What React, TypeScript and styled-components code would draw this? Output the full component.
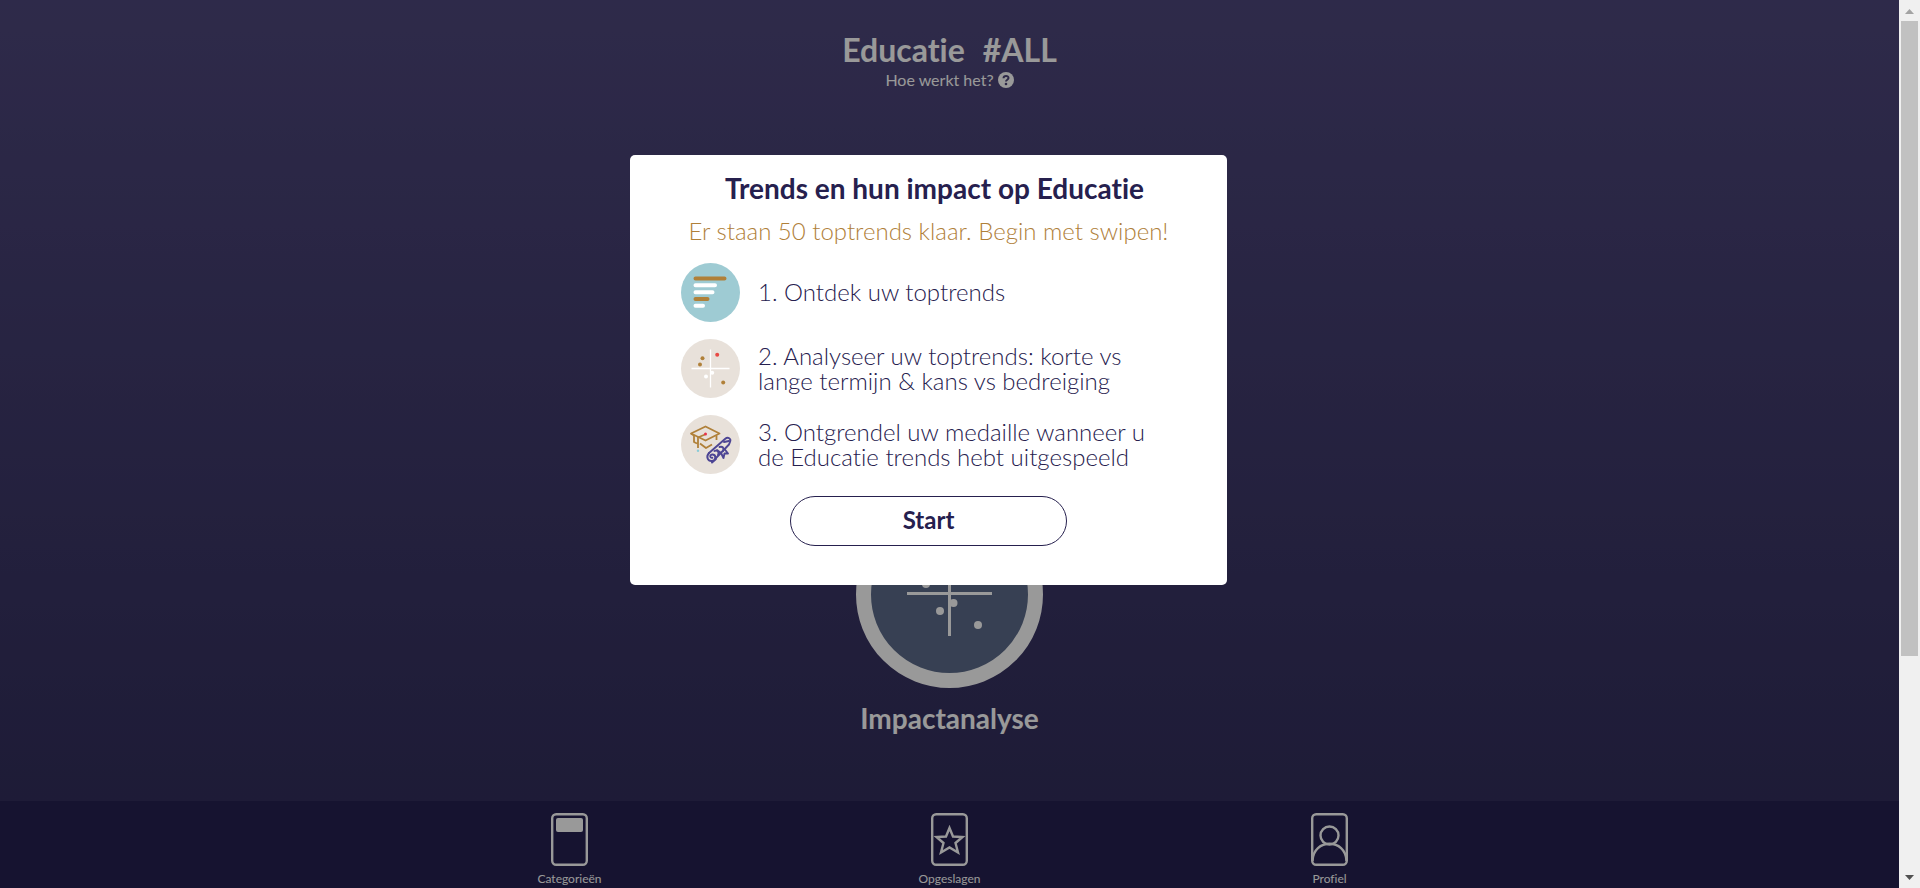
import React from "react";
import styled, { createGlobalStyle } from "styled-components";

const GlobalStyle = createGlobalStyle`
  *, *::before, *::after { box-sizing: border-box; }
  body {
    margin: 0;
    overflow: hidden;
    font-family: Lato, "Liberation Sans", sans-serif;
    font-variant-ligatures: none;
    color: #fff;
  }
  h1, h2, p, ol { margin: 0; padding: 0; }
`;

const Shell = styled.div`
  display: flex;
  height: 100vh;
`;

const Screen = styled.div`
  position: relative;
  display: flex;
  flex: 1;
  flex-direction: column;
  min-width: 0;
  overflow: hidden;
  background: linear-gradient(#4e477c, #322e5c 800px);
`;

const Header = styled.header`
  display: flex;
  flex-direction: column;
  align-items: center;
  padding-top: 30px;
`;

const PageTitle = styled.h1`
  display: flex;
  gap: 18px;
  font-size: 32px;
  line-height: 40px;
  font-weight: 700;
`;

const HelpLink = styled.a`
  display: flex;
  align-items: center;
  gap: 4px;
  color: inherit;
  font-size: 16px;
  line-height: 20px;
  text-decoration: none;
`;

const Content = styled.main`
  display: flex;
  flex: 1;
  flex-direction: column;
  align-items: center;
  justify-content: flex-end;
  min-height: 0;
  padding-bottom: 65px;
`;

const AnalysisLink = styled.a`
  display: flex;
  flex-direction: column;
  align-items: center;
  gap: 12px;
  color: inherit;
  font-size: 28px;
  line-height: 36px;
  font-weight: 700;
  text-decoration: none;
`;

const NavBar = styled.nav`
  display: flex;
  justify-content: center;
  height: 87px;
  flex-shrink: 0;
  padding-top: 12px;
  background: #262050;
`;

const NavItem = styled.a`
  display: flex;
  flex: 0 1 380px;
  flex-direction: column;
  align-items: center;
  gap: 5px;
  color: inherit;
  font-size: 12px;
  line-height: 16px;
  text-decoration: none;
`;

const Backdrop = styled.div`
  position: absolute;
  inset: 0;
  display: flex;
  align-items: flex-start;
  justify-content: center;
  padding: 155px 42px 0 0;
  background: rgba(0, 0, 0, 0.4);
`;

const Dialog = styled.section`
  display: flex;
  flex-direction: column;
  align-items: center;
  width: 597px;
  max-width: 100%;
  padding: 15px 51px 39px;
  border-radius: 5px;
  background: #fff;
  color: #26204e;
`;

const DialogTitle = styled.h2`
  padding-left: 12px;
  font-size: 28px;
  line-height: 36px;
  font-weight: 700;
  white-space: nowrap;
`;

const Lead = styled.p`
  margin-top: 9px;
  color: #b08039;
  font-size: 24px;
  line-height: 32px;
  font-weight: 300;
  white-space: nowrap;
`;

const Steps = styled.ol`
  display: flex;
  flex-direction: column;
  align-self: stretch;
  gap: 17px;
  margin-top: 16px;
  list-style: none;
`;

const Step = styled.li`
  display: flex;
  align-items: center;
  gap: 18px;
  font-size: 24px;
  line-height: 25px;
  font-weight: 300;

  svg { flex-shrink: 0; }
`;

const StepText = styled.p`
  max-width: 400px;
  padding-bottom: 2px;
`;

const StartButton = styled.button`
  width: 277px;
  height: 50px;
  margin-top: 22px;
  padding: 0 0 2px;
  border: 1px solid #26204e;
  border-radius: 25px;
  background: #fff;
  color: #26204e;
  font: 700 24px/32px Lato, "Liberation Sans", sans-serif;
  cursor: pointer;
`;

const ScrollTrack = styled.div`
  display: flex;
  flex: 0 0 21px;
  flex-direction: column;
  align-items: center;
  justify-content: space-between;
  background: #f0f0f0;
`;

const ScrollThumb = styled.div`
  flex: 0 1 635px;
  width: 17px;
  margin-bottom: auto;
  background: #c1c1c1;
`;

const ScrollArrow = ({ down = false }: { down?: boolean }) => (
  <svg width="21" height="21" viewBox="0 0 21 21">
    {down ? <path d="M6 8h9l-4.5 5z" fill="#505050" /> : <path d="M6 14h9l-4.500-5z" fill="#a3a3a3" />}
  </svg>
);

const HelpIcon = () => (
  <svg width="16" height="16" viewBox="0 0 16 16" aria-hidden="true">
    <circle cx="8" cy="8" r="8" fill="#fff" />
    <path d="M5.500 6.200C5.700 3.200 10.600 3.200 10.500 6.100C10.500 7.800 8 7.700 8 9.500" fill="none" stroke="#4b4477" strokeWidth="2" />
    <circle cx="8" cy="12" r="1.300" fill="#4b4477" />
  </svg>
);

const ImpactIcon = () => (
  <svg width="187" height="187" viewBox="0 0 187 187" aria-hidden="true">
    <circle cx="93.500" cy="93.500" r="86" fill="#5c6b8a" stroke="#fff" strokeWidth="15" />
    <g fill="#fff">
      <path d="M51 91h85v3H51zM92 50h3v85h-3z" />
      <circle cx="70" cy="83" r="4" />
      <circle cx="75" cy="70" r="4" />
      <circle cx="108" cy="61" r="4" />
      <circle cx="84" cy="110" r="4" />
      <circle cx="97.500" cy="102" r="4" />
      <circle cx="122" cy="124" r="4" />
    </g>
  </svg>
);

const ListIcon = () => (
  <svg width="59" height="59" viewBox="0 0 59 59" aria-hidden="true">
    <circle cx="29.500" cy="29.500" r="29.500" fill="#9ecbd3" />
    <g fill="none" strokeWidth="4" strokeLinecap="round">
      <path d="M14.500 15.500h29M14.500 36h12" stroke="#b08039" />
      <path d="M14.500 22.200h19.500M14.500 29.200h17M14.500 42.700h7.500" stroke="#fff" />
    </g>
  </svg>
);

const ScatterIcon = () => (
  <svg width="59" height="59" viewBox="0 0 59 59" aria-hidden="true">
    <circle cx="29.500" cy="29.500" r="29.500" fill="#e8e1da" />
    <path d="M10.500 29.500h38M29.500 10.500v38" stroke="#fff" strokeWidth="1.300" />
    <g fill="#b08039">
      <circle cx="21.500" cy="19.300" r="2" />
      <circle cx="19" cy="25.500" r="2" />
      <circle cx="42.200" cy="43.500" r="2" />
    </g>
    <circle cx="36.200" cy="15.700" r="2" fill="#e84a45" />
    <circle cx="25" cy="37.500" r="2" fill="#fff" />
    <circle cx="31.200" cy="33.800" r="2" fill="#fff" />
  </svg>
);

const MedalIcon = () => (
  <svg width="59" height="59" viewBox="0 0 59 59" aria-hidden="true">
    <circle cx="29.500" cy="29.500" r="29.500" fill="#e8e1da" />
    <g fill="none" stroke="#b08039" strokeWidth="1.800" strokeLinejoin="round">
      <path d="M10 18.500L24.500 11.500L38.500 18.500L24.500 25.500Z" />
      <path d="M10 18.500L13 20.500V27L16 28.500M19 28.500L25 33L31 29.500M35.500 20.500V25M24 19.500L17 22.500V33" />
    </g>
    <circle cx="24.500" cy="18.900" r="1.500" fill="#e8344a" />
    <circle cx="17" cy="35.800" r="1.200" fill="#8accd8" />
    <g fill="none" stroke="#4d4594" strokeWidth="1.900" strokeLinecap="round" strokeLinejoin="round">
      <path d="M28 38L44 24C47 21.500 50.500 23.500 49 27L48 29.500L35 43" />
      <path d="M28 38C24.500 42 27 46.500 31 46C35 45.500 35.500 40 31.800 39.500C28.500 39.200 28.500 43.200 31.300 42.800" />
      <path d="M31 47.500L35 44M43 27L48 26M33.500 36C36.500 34.500 38.500 37 37 40M38.500 32C41.500 31 43.500 33 42 36M40 38L42.500 43L43.500 38.500L47 38.500L43.500 34M36 35L40 38" />
    </g>
  </svg>
);

const CardFrame = ({ children }: { children: React.ReactNode }) => (
  <svg width="37" height="53" viewBox="0 0 37 53" fill="none" stroke="#fff" strokeWidth="2.400" aria-hidden="true">
    <rect x="1.200" y="1.200" width="34.600" height="50.600" rx="4" />
    {children}
  </svg>
);

const steps = [
  { icon: <ListIcon />, text: "1. Ontdek uw toptrends" },
  { icon: <ScatterIcon />, text: "2. Analyseer uw toptrends: korte vs lange termijn & kans vs bedreiging" },
  { icon: <MedalIcon />, text: "3. Ontgrendel uw medaille wanneer u de Educatie trends hebt uitgespeeld" },
];

const navItems = [
  { label: "Categorieën", icon: <rect x="5" y="5" width="27" height="14" rx="2" fill="#fff" stroke="none" /> },
  {
    label: "Opgeslagen",
    icon: <path d="M18.500 15L22 23.500L31.500 24L24.500 30L27 39.500L18.500 34.500L10 39.500L12.500 30L5.500 24L15 23.500Z" />,
  },
  {
    label: "Profiel",
    icon: (
      <>
        <circle cx="18.500" cy="22.500" r="9" />
        <path d="M1.500 48C2 25 35 25 35.500 48" />
      </>
    ),
  },
];

export default function App() {
  return (
    <>
      <GlobalStyle />
      <Shell>
        <Screen>
          <Header>
            <PageTitle>
              <span>Educatie</span>
              <span>#ALL</span>
            </PageTitle>
            <HelpLink href="#help">
              Hoe werkt het? <HelpIcon />
            </HelpLink>
          </Header>
          <Content>
            <AnalysisLink href="#impact">
              <ImpactIcon />
              Impactanalyse
            </AnalysisLink>
          </Content>
          <NavBar>
            {navItems.map(({ label, icon }) => (
              <NavItem key={label} href={`#${label}`}>
                <CardFrame>{icon}</CardFrame>
                {label}
              </NavItem>
            ))}
          </NavBar>
          <Backdrop>
            <Dialog role="dialog" aria-modal="true" aria-labelledby="dialog-title">
              <DialogTitle id="dialog-title">Trends en hun impact op Educatie</DialogTitle>
              <Lead>Er staan 50 toptrends klaar. Begin met swipen!</Lead>
              <Steps>
                {steps.map(({ icon, text }) => (
                  <Step key={text}>
                    {icon}
                    <StepText>{text}</StepText>
                  </Step>
                ))}
              </Steps>
              <StartButton type="button">Start</StartButton>
            </Dialog>
          </Backdrop>
        </Screen>
        <ScrollTrack aria-hidden="true">
          <ScrollArrow />
          <ScrollThumb />
          <ScrollArrow down />
        </ScrollTrack>
      </Shell>
    </>
  );
}
